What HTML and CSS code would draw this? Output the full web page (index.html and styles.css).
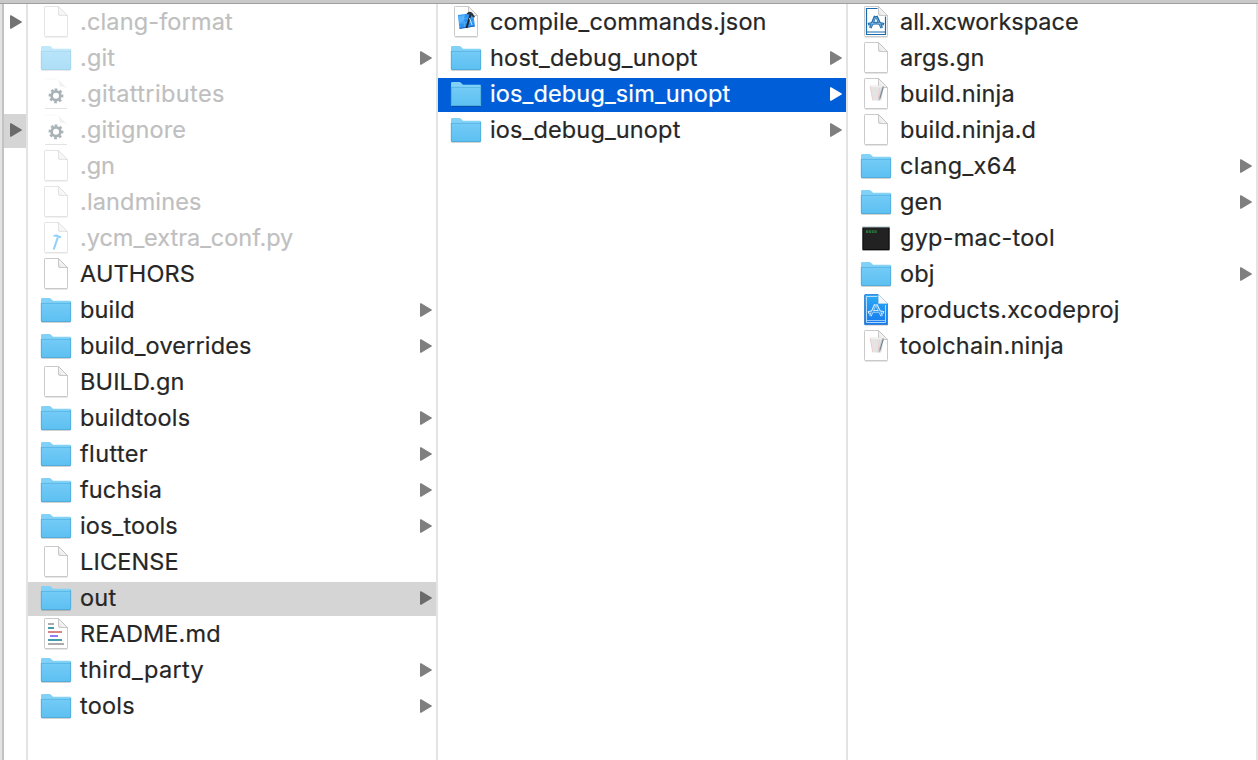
FILE: index.html
```html
<!DOCTYPE html>
<html lang="en">
<head>
<meta charset="utf-8">
<title>out</title>
<link rel="stylesheet" href="styles.css">
</head>
<body>
<svg class="defs" width="0" height="0" aria-hidden="true">
  <defs>
    <linearGradient id="fold" x1="0" y1="0" x2="0" y2="1"><stop offset="0" stop-color="#74cbf6"/><stop offset="1" stop-color="#5cc0f1"/></linearGradient>
    <linearGradient id="blue" x1="0" y1="0" x2="0" y2="1"><stop offset="0" stop-color="#2cacf5"/><stop offset="1" stop-color="#1678ee"/></linearGradient>
    <linearGradient id="curl" x1="0" y1="1" x2="1" y2="0"><stop offset="0" stop-color="#dedede"/><stop offset=".6" stop-color="#fff"/></linearGradient>
    <symbol id="folder" viewBox="0 0 32 32">
      <path d="M1.5 28.3h29" stroke="#000" stroke-opacity=".22" stroke-width="1"/>
      <path d="M1 5.2Q1 4 2.2 4h7.3q.7 0 1.2.5l2.300 2.300h16.800Q31 6.800 31 8v19q0 1-1 1H2q-1 0-1-1z" fill="#82d2f8"/>
      <path d="M1 9h30v18q0 1-1 1H2q-1 0-1-1z" fill="url(#fold)"/>
      <path d="M1.500 9.400h29" stroke="#56b1e0" stroke-width=".8"/>
      <path d="M1.300 9v18M30.700 8v19M1.500 27.500h29" stroke="#4ca7d6" stroke-width=".8" fill="none"/>
    </symbol>
    <symbol id="page" viewBox="0 0 32 32">
      <path d="M5 30.900h22.500" stroke="#000" stroke-opacity=".2" stroke-width="1.200"/>
      <path d="M5.300.5H18.500L27.500 9.500V29.700q0 .8-.8.8H5.300q-.8 0-.8-.8V1.300q0-.8.8-.8z" fill="#fff" stroke="#c4c4c4" stroke-width=".9"/>
      <path d="M18.500.7V8q0 1.500 1.500 1.500h7.300z" fill="url(#curl)" stroke="#bdbdbd" stroke-width=".8"/>
    </symbol>
    <symbol id="gear" viewBox="0 0 32 32">
      <path d="M5 30.500h22" stroke="#c8c8c8" stroke-width="1"/>
      <path d="M5 1h12" stroke="#eee" stroke-width=".8"/>
      <path d="M18 1.500 27 10q-3-2-7-1.500Q19.500 4 18 1.500z" fill="#e4e4e4"/>
      <g stroke="#53666f" fill="none"><circle cx="16" cy="17.800" r="4.400" stroke-width="2.700"/><circle cx="16" cy="17.800" r="6.300" stroke-width="2.200" stroke-dasharray="2.600 2.348" transform="rotate(-102 16 17.800)"/></g>
    </symbol>
    <symbol id="hammer" viewBox="0 0 32 32">
      <use href="#page"/>
      <path d="M17.800 15.500 13.700 27.500" stroke="#1fa5f5" stroke-width="2.100"/>
      <path d="M13.500 13.300q3-1.500 5 .3l2.700.6-.8 2-2.500-.6q-2-1.300-4.700-1z" fill="#1fa5f5"/>
    </symbol>
    <symbol id="xcode" viewBox="0 0 32 32">
      <use href="#page"/>
      <path d="M8 9 23 7l2 13.500L9.500 23z" fill="#2b93f3"/>
      <path d="M8.500 10 15 9 13 16 9 17z" fill="#56b3fa"/>
      <path d="M9 13 24 11.500M9.500 17.500l15-2M13 8.500l2 14" stroke="#6dbdfb" stroke-width=".5"/>
      <path d="M9.500 21.700 24.500 19.500v1L9.600 22.700z" fill="#2d66bd"/>
      <path d="M20.500 8.500 16.500 22" stroke="#20262b" stroke-width="1.900"/>
      <path d="M16.500 7.800q2.500-3.300 5-1.500l3.500 4.500-1.300 1-2.700-2.700-2.400-.6z" fill="#303438"/>
      <path d="M19.500 12 22 19" stroke="#d8edfa" stroke-width=".9"/>
    </symbol>
    <symbol id="workspace" viewBox="0 0 32 32">
      <use href="#page"/>
      <path d="M17.500 2.500H6.500V28.500H25.500V10.500" fill="none" stroke="#1a6bad" stroke-width="1.200"/>
      <path d="M6.500 26h19" stroke="#1a6bad" stroke-width="1"/>
      <g fill="none" stroke="#1a6bad" stroke-width="2.700"><path d="M15.200 10 10.300 22M16.300 10 21.800 22M8 18.300q8-2.500 16 0"/></g>
      <g fill="none" stroke="#9cc6e5" stroke-width=".7"><path d="M15.200 11 10.500 21.500M16.300 11 21.500 21.500M9 18.100q7-2 14 0"/></g>
    </symbol>
    <symbol id="project" viewBox="0 0 32 32">
      <path d="M5 31h23" stroke="#000" stroke-opacity=".25"/>
      <path d="M5 .5H18.500L27.500 9.500V30.500H4.500V1z" fill="url(#blue)" stroke="#1870cd" stroke-width=".7"/>
      <path d="M18.500.5V9.500h9z" fill="#f5f8fa" stroke="#bdd6e9" stroke-width=".6"/>
      <path d="M17.500 2.500H6.500V28.500H25.500V11" fill="none" stroke="#c4e4fb" stroke-width=".9"/>
      <path d="M6.500 26.500h19" stroke="#c4e4fb" stroke-width=".7"/>
      <g fill="none" stroke="#d4edfd" stroke-width="2.500"><path d="M15.200 10.500 10.300 22M16.300 10.500 21.800 22M8 18.500q8-2.500 16 0"/></g>
      <g fill="none" stroke="#258eee" stroke-width=".9"><path d="M15.200 11.500 10.500 21.500M16.300 11.500 21.500 21.500M9 18.400q7-2 14 0"/></g>
    </symbol>
    <symbol id="script" viewBox="0 0 32 32">
      <use href="#page"/>
      <path d="M10 7.500 24 8 21.500 22.500H12.500z" fill="#e4e4e4"/>
      <path d="M10.200 8 12.700 22M19.500 9 18 22" stroke="#efcfcd" stroke-width="1"/>
      <path d="M10.500 8.200 24 8.700" stroke="#f0f0f0" stroke-width="1.500"/>
      <path d="M23.300 8.500 19.700 20.500" stroke="#7c858d" stroke-width="1.400"/>
      <path d="M22.300 9 18.900 20" stroke="#b5cad6" stroke-width=".7"/>
      <path d="M19.700 20 18.800 22.500" stroke="#8fb6cf" stroke-width="1"/>
    </symbol>
    <symbol id="exec" viewBox="0 0 32 32">
      <path d="M2.500 28.500h27" stroke="#000" stroke-opacity=".35" stroke-width="1"/>
      <path d="M2.500 5h27v23h-27z" fill="#222"/>
      <path d="M2 5h28" stroke="#a2bcc0" stroke-width=".9"/>
      <path d="M3 6v21.500h26V6" fill="none" stroke="#0c0c0c" stroke-width="1"/>
      <path d="M6 9.700h11" stroke="#2c9c44" stroke-width="2.200" stroke-dasharray="2.200 .6"/>
      <path d="M6.500 9.700h10" stroke="#222" stroke-width=".5"/>
    </symbol>
    <symbol id="markdown" viewBox="0 0 32 32">
      <use href="#page"/>
      <g stroke-width="2"><path d="M8 6h6M8 26h16" stroke="#ababab"/><path d="M8 10h6M8 22h14" stroke="#449ba9"/><path d="M8 14h14" stroke="#dc8587"/><path d="M10 18h8" stroke="#997cf4"/></g>
    </symbol>
    <symbol id="arrow" viewBox="0 0 12 14"><path d="M1.200.3 11.600 6.400q.8.600 0 1.200L1.200 13.700Q0 14.200 0 13V1Q0-.2 1.200.3z" fill="currentColor"/></symbol>
  </defs>
</svg>
<div class="browser">
  <section class="column parent">
    <div class="row"><svg class="arrow"><use href="#arrow"/></svg></div>
    <div class="row empty"></div>
    <div class="row empty"></div>
    <div class="row current"><svg class="arrow"><use href="#arrow"/></svg></div>
  </section>
  <section class="column">
    <div class="row hidden"><svg class="icon"><use href="#page"/></svg><span class="name">.clang-format</span></div>
    <div class="row hidden"><svg class="icon"><use href="#folder"/></svg><span class="name">.git</span><svg class="arrow"><use href="#arrow"/></svg></div>
    <div class="row hidden"><svg class="icon"><use href="#gear"/></svg><span class="name loosest">.gitattributes</span></div>
    <div class="row hidden"><svg class="icon"><use href="#gear"/></svg><span class="name">.gitignore</span></div>
    <div class="row hidden"><svg class="icon"><use href="#page"/></svg><span class="name tight">.gn</span></div>
    <div class="row hidden"><svg class="icon"><use href="#page"/></svg><span class="name">.landmines</span></div>
    <div class="row hidden"><svg class="icon"><use href="#hammer"/></svg><span class="name tight">.ycm_extra_conf.py</span></div>
    <div class="row"><svg class="icon"><use href="#page"/></svg><span class="name">AUTHORS</span></div>
    <div class="row"><svg class="icon"><use href="#folder"/></svg><span class="name">build</span><svg class="arrow"><use href="#arrow"/></svg></div>
    <div class="row"><svg class="icon"><use href="#folder"/></svg><span class="name">build_overrides</span><svg class="arrow"><use href="#arrow"/></svg></div>
    <div class="row"><svg class="icon"><use href="#page"/></svg><span class="name">BUILD.gn</span></div>
    <div class="row"><svg class="icon"><use href="#folder"/></svg><span class="name loose">buildtools</span><svg class="arrow"><use href="#arrow"/></svg></div>
    <div class="row"><svg class="icon"><use href="#folder"/></svg><span class="name loosest">flutter</span><svg class="arrow"><use href="#arrow"/></svg></div>
    <div class="row"><svg class="icon"><use href="#folder"/></svg><span class="name">fuchsia</span><svg class="arrow"><use href="#arrow"/></svg></div>
    <div class="row"><svg class="icon"><use href="#folder"/></svg><span class="name">ios_tools</span><svg class="arrow"><use href="#arrow"/></svg></div>
    <div class="row"><svg class="icon"><use href="#page"/></svg><span class="name">LICENSE</span></div>
    <div class="row current"><svg class="icon"><use href="#folder"/></svg><span class="name loose">out</span><svg class="arrow"><use href="#arrow"/></svg></div>
    <div class="row"><svg class="icon"><use href="#markdown"/></svg><span class="name">README.md</span></div>
    <div class="row"><svg class="icon"><use href="#folder"/></svg><span class="name loosest">third_party</span><svg class="arrow"><use href="#arrow"/></svg></div>
    <div class="row"><svg class="icon"><use href="#folder"/></svg><span class="name loose">tools</span><svg class="arrow"><use href="#arrow"/></svg></div>
  </section>
  <section class="column">
    <div class="row"><svg class="icon"><use href="#xcode"/></svg><span class="name">compile_commands.json</span></div>
    <div class="row"><svg class="icon"><use href="#folder"/></svg><span class="name loose">host_debug_unopt</span><svg class="arrow"><use href="#arrow"/></svg></div>
    <div class="row selected"><svg class="icon"><use href="#folder"/></svg><span class="name">ios_debug_sim_unopt</span><svg class="arrow"><use href="#arrow"/></svg></div>
    <div class="row"><svg class="icon"><use href="#folder"/></svg><span class="name">ios_debug_unopt</span><svg class="arrow"><use href="#arrow"/></svg></div>
  </section>
  <section class="column">
    <div class="row"><svg class="icon"><use href="#workspace"/></svg><span class="name tight">all.xcworkspace</span></div>
    <div class="row"><svg class="icon"><use href="#page"/></svg><span class="name">args.gn</span></div>
    <div class="row"><svg class="icon"><use href="#script"/></svg><span class="name">build.ninja</span></div>
    <div class="row"><svg class="icon"><use href="#page"/></svg><span class="name">build.ninja.d</span></div>
    <div class="row"><svg class="icon"><use href="#folder"/></svg><span class="name loosest">clang_x64</span><svg class="arrow"><use href="#arrow"/></svg></div>
    <div class="row"><svg class="icon"><use href="#folder"/></svg><span class="name">gen</span><svg class="arrow"><use href="#arrow"/></svg></div>
    <div class="row"><svg class="icon"><use href="#exec"/></svg><span class="name loose">gyp-mac-tool</span></div>
    <div class="row"><svg class="icon"><use href="#folder"/></svg><span class="name">obj</span><svg class="arrow"><use href="#arrow"/></svg></div>
    <div class="row"><svg class="icon"><use href="#project"/></svg><span class="name loose">products.xcodeproj</span></div>
    <div class="row"><svg class="icon"><use href="#script"/></svg><span class="name loose">toolchain.ninja</span></div>
  </section>
</div>
</body>
</html>
```
FILE: styles.css
```css
* { box-sizing: border-box; }
body {
  margin: 0;
  background: #fff;
  color: #262626;
  font: 23.5px/32px Inter, "Liberation Sans", sans-serif;
  letter-spacing: .14px;
}
.defs { position: absolute; }
.browser {
  height: 760px;
  display: grid;
  grid-template-columns: 24px repeat(3, 410px);
  padding: 4px 0 0 4px;
  background:
    linear-gradient(#c9c9c9 3px, #9f9f9f 3px) 0 0 / 100% 4px no-repeat,
    linear-gradient(90deg, #e3e3e3 2px, #c3c3c3 2px) 0 0 / 4px 100% no-repeat;
  overflow: hidden;
}
.column {
  display: flex;
  flex-direction: column;
  gap: 2px;
  padding-top: 2px;
  border-right: 2px solid #e3e3e3;
}
.row {
  height: 34px;
  display: flex;
  align-items: center;
  gap: 8px;
  padding: 0 4px 2px 12px;
}
.parent .row { padding-left: 6px; }
.icon { width: 32px; height: 32px; flex: none; }
.name { white-space: nowrap; -webkit-text-stroke: .2px currentColor; }
.tight { letter-spacing: -.03px; }
.loose { letter-spacing: .22px; }
.loosest { letter-spacing: .38px; }
.arrow { width: 12px; height: 14px; margin-left: auto; color: #7f7f7f; }
.parent .arrow { color: #737373; }
.current .arrow { color: #6b6b6b; }
.current { background: #d5d5d5; }
.selected { background: #005fd8; color: #fff; }
.selected .arrow { color: #fff; }
.hidden .icon { opacity: .5; }
.hidden .name { color: #bfbfbf; }
```
